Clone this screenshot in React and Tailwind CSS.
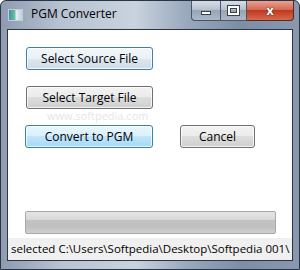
import React from "react";

const font = { fontFamily: '"Segoe UI", "Open Sans", "Noto Sans", sans-serif' };

function Btn({ children, variant = "normal", className = "" }) {
  const styles = {
    normal:
      "border-[#707070] bg-[linear-gradient(#f2f2f2_0%,#ebebeb_50%,#dddddd_50%,#cfcfcf_100%)]",
    focus:
      "border-[#3c7fb1] bg-[linear-gradient(#f1f7fb_0%,#e9f1f6_50%,#dbe6ee_50%,#cfdde8_100%)]",
    hover:
      "border-[#3c7fb1] bg-[linear-gradient(#eaf6fd_0%,#d9f0fc_50%,#bee6fd_50%,#a7d9f5_100%)]",
  };
  return (
    <div
      className={`flex h-[23px] items-center justify-center rounded-[3px] border text-[12px] text-black shadow-[inset_0_0_0_1px_rgba(255,255,255,0.75)] ${styles[variant]} ${className}`}
    >
      {children}
    </div>
  );
}

export default function App() {
  return (
    <div
      style={font}
      className="relative h-[270px] w-[300px] overflow-hidden rounded-t-[6px] border border-[#2a3444] bg-[linear-gradient(90deg,#8e9bb0_0%,#b7c3d1_20%,#c9d3de_45%,#9aa9bd_62%,#7d8ea7_80%,#8a98ae_100%)]"
    >
      {/* Title bar */}
      <div className="flex h-[28px] items-start">
        <div className="ml-[7px] mt-[8px] h-[12px] w-[15px] border border-[#c6ccd4] bg-[linear-gradient(90deg,#3f8fb0_0%,#6fbf9e_45%,#e8f0f0_55%,#b8d0de_100%)]" />
        <div className="ml-[8px] mt-[5px] text-[12px] leading-[16px] text-black">PGM Converter</div>
        <div className="ml-auto mr-[5px] flex h-[20px]">
          <div className="flex h-[20px] w-[29px] items-center justify-center rounded-bl-[4px] border border-r-0 border-t-0 border-[#4a5566] bg-[linear-gradient(#d6dde6_0%,#b3bfcd_50%,#97a5b8_50%,#aab8c8_100%)]">
            <div className="mt-[5px] h-[4px] w-[10px] border border-[#3a3f48] bg-white" />
          </div>
          <div className="flex h-[20px] w-[27px] items-center justify-center border border-t-0 border-[#4a5566] bg-[linear-gradient(#d6dde6_0%,#b3bfcd_50%,#97a5b8_50%,#aab8c8_100%)]">
            <div className="h-[9px] w-[11px] border-[2px] border-white shadow-[0_0_0_1px_#3a3f48,inset_0_0_0_1px_#3a3f48]" />
          </div>
          <div className="flex h-[20px] w-[47px] items-center justify-center rounded-br-[4px] border border-l-0 border-t-0 border-[#5a2a22] bg-[linear-gradient(#e8a292_0%,#d0644e_50%,#c0391f_50%,#d56a4c_100%)] text-[13px] font-bold leading-none text-white [text-shadow:0_0_1px_#3a1a10,0_0_1px_#3a1a10]">
            x
          </div>
        </div>
      </div>

      {/* Client area */}
      <div className="mx-[6px] flex h-[232px] flex-col border border-[#2a3444] bg-white">
        <div className="flex flex-1 flex-col px-[17px] pt-[17px]">
          <Btn variant="focus" className="ml-[1px] w-[127px]">Select Source File</Btn>
          <div className="relative mt-[16px]">
            <Btn className="ml-[1px] w-[127px]">Select Target File</Btn>
            <div className="pointer-events-none absolute left-[22px] top-[23px] text-[11px] leading-[14px] text-[#e6e6e6]">
              www.softpedia.com
            </div>
          </div>
          <div className="mt-[16px] flex">
            <Btn variant="hover" className="w-[128px]">Convert to PGM</Btn>
            <Btn className="ml-[27px] w-[75px]">Cancel</Btn>
          </div>
          <div className="mt-auto mb-[4px] h-[23px] w-[251px] rounded-[2px] border border-[#a8a8a8] bg-[linear-gradient(#e4e4e4_0%,#dadada_35%,#c2c2c2_40%,#c0c0c0_70%,#d0d0d0_100%)]" />
        </div>
        <div className="h-[22px] overflow-hidden whitespace-nowrap bg-[#f0f0f0] pl-[3px] text-[11.5px] leading-[22px] text-black">
          selected C:\Users\Softpedia\Desktop\Softpedia 001\
        </div>
      </div>
    </div>
  );
}
